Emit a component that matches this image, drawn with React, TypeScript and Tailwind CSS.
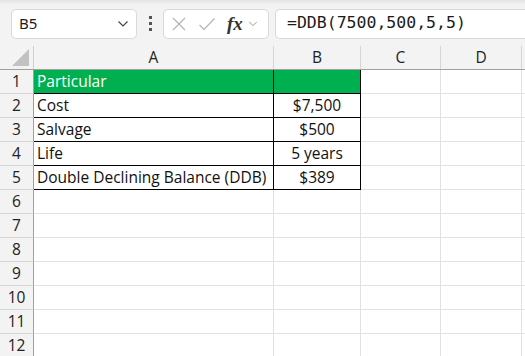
import React from "react";

const cellFont = { fontFamily: "'Open Sans', 'Noto Sans', sans-serif" };

function Chevron({ className = "" }: { className?: string }) {
  return (
    <svg width="12" height="8" viewBox="0 0 12 8" className={className}>
      <path d="M1.5 1.5 L6 6 L10.5 1.5" fill="none" stroke="currentColor" strokeWidth="1.2" />
    </svg>
  );
}

const cols = [
  { name: "A", w: 240 },
  { name: "B", w: 87 },
  { name: "C", w: 80 },
  { name: "D", w: 81 },
  { name: "", w: 40 },
];

type Row = { a?: string; b?: string; head?: boolean; table?: boolean };
const rows: Row[] = [
  { a: "Particular", b: "", head: true, table: true },
  { a: "Cost", b: "$7,500", table: true },
  { a: "Salvage", b: "$500", table: true },
  { a: "Life", b: "5 years", table: true },
  { a: "Double Declining Balance (DDB)", b: "$389", table: true },
  {}, {}, {}, {}, {}, {}, {},
];

export default function App() {
  return (
    <div className="w-[525px] h-[356px] overflow-hidden bg-white text-[#222]" style={cellFont}>
      {/* toolbar */}
      <div className="h-[46px] bg-[#f3f3f3] relative flex items-center pl-[11px] pt-[1px]">
        <div className="absolute left-0 right-0 top-0 h-[5px] bg-gradient-to-b from-[#e4e4e4] to-[#f3f3f3]" />
        <div className="relative w-[126px] h-[30px] rounded-[5px] border border-[#d9d9d9] bg-white flex items-center justify-between pl-[7px] pr-[7px]">
          <span className="text-[15px] text-[#1b1b1b]" style={{ fontFamily: "'Noto Sans', sans-serif" }}>B5</span>
          <Chevron className="text-[#444]" />
        </div>
        <div className="relative w-[26px] flex flex-col items-center gap-[3px]">
          <span className="w-[3px] h-[3px] bg-[#555]" />
          <span className="w-[3px] h-[3px] bg-[#555]" />
          <span className="w-[3px] h-[3px] bg-[#555]" />
        </div>
        <div className="relative w-[106px] h-[30px] rounded-[5px] border border-[#d9d9d9] bg-white flex items-center pl-[7px]">
          <svg width="16" height="16" viewBox="0 0 16 16">
            <path d="M2 2 L14 14 M14 2 L2 14" stroke="#b3b3b3" strokeWidth="1.2" />
          </svg>
          <svg width="18" height="16" viewBox="0 0 18 16" className="ml-[11px]">
            <path d="M1.5 9 L6 13.5 L16.5 2.5" fill="none" stroke="#b3b3b3" strokeWidth="1.2" />
          </svg>
          <span className="ml-[11px] text-[19px] italic font-bold text-[#333] leading-none" style={{ fontFamily: "'Liberation Serif', serif" }}>fx</span>
          <Chevron className="ml-[5px] text-[#999] w-[10px]" />
        </div>
        <div className="relative ml-[6px] flex-1 h-[30px] rounded-l-[5px] border border-r-0 border-[#d9d9d9] bg-white flex items-center pl-[11px]">
          <span className="text-[16.5px] text-[#1b1b1b]" style={{ fontFamily: "'DejaVu Sans Mono', monospace" }}>=DDB(7500,500,5,5)</span>
        </div>
      </div>
      {/* column headers */}
      <div className="flex h-[24px] bg-[#f3f3f3] border-b border-[#9f9f9f]">
        <div className="w-[34px] shrink-0 border-r border-[#cfcfcf] relative">
          <svg width="17" height="17" viewBox="0 0 17 17" className="absolute right-[4px] bottom-[3px]">
            <path d="M17 0 L17 17 L0 17 Z" fill="#c2c2c2" />
          </svg>
        </div>
        {cols.map((c, i) => (
          <div key={i} style={{ width: c.w }} className="shrink-0 border-r border-[#d6d6d6] flex items-center justify-center text-[15.5px] text-[#222]">
            {c.name}
          </div>
        ))}
      </div>
      {/* rows */}
      {rows.map((r, i) => (
        <div key={i} className="flex h-[24px]">
          <div className="w-[34px] shrink-0 bg-[#f3f3f3] border-r border-b border-r-[#9f9f9f] border-b-[#d6d6d6] flex items-center justify-center text-[15.5px] text-[#222]">
            {i + 1}
          </div>
          <div
            className={`w-[240px] shrink-0 flex items-center pl-[3px] text-[15.5px] whitespace-nowrap ${
              r.table ? "border-b border-r border-black" : "border-b border-r border-[#e1e1e1]"
            } ${r.head ? "bg-[#00b050] text-white" : "text-[#111]"}`}
          >
            {r.a}
          </div>
          <div
            className={`w-[87px] shrink-0 flex items-center justify-center text-[15.5px] ${
              r.table ? "border-b border-r border-black" : "border-b border-r border-[#e1e1e1]"
            } ${r.head ? "bg-[#00b050]" : "text-[#111]"}`}
          >
            {r.b}
          </div>
          <div className="w-[80px] shrink-0 border-b border-r border-[#e1e1e1]" />
          <div className="w-[81px] shrink-0 border-b border-r border-[#e1e1e1]" />
          <div className="w-[40px] shrink-0 border-b border-[#e1e1e1]" />
        </div>
      ))}
    </div>
  );
}
